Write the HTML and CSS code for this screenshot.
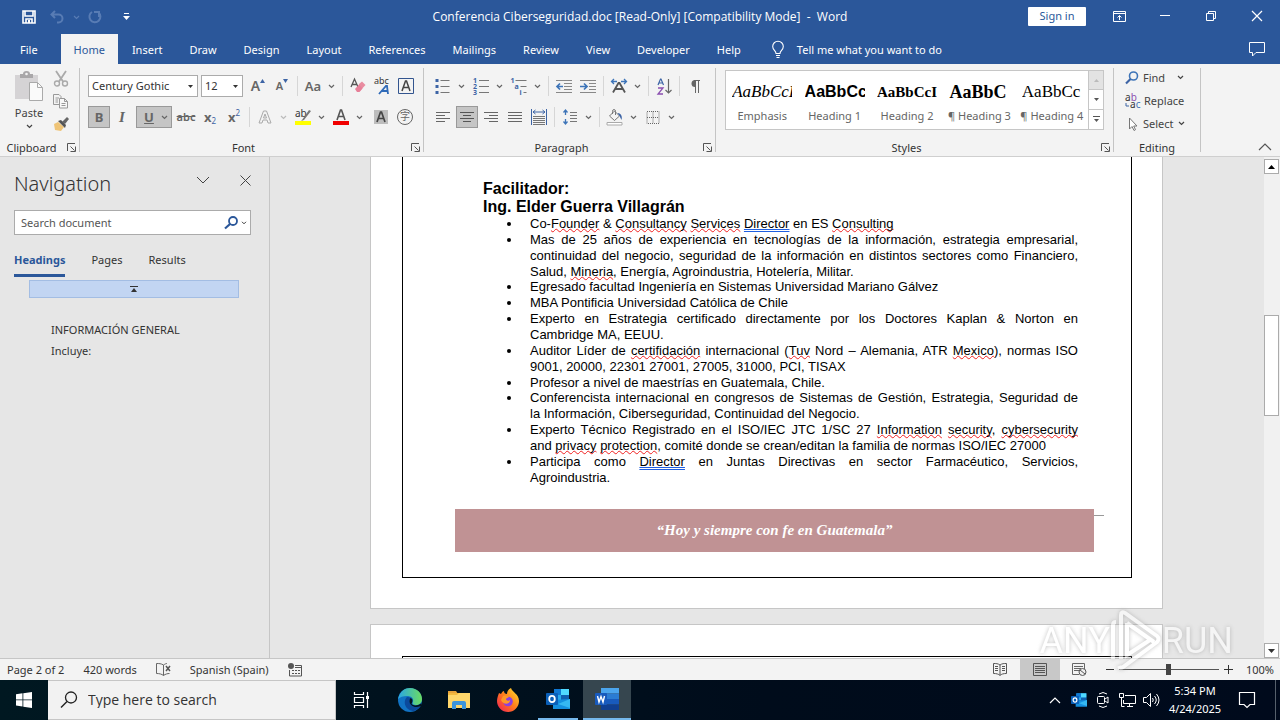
FILE: index.html
```html
<!DOCTYPE html>
<html lang="en">
<head>
    <meta charset="utf-8">
    <title>Conferencia Ciberseguridad.doc - Word</title>
    <link rel="stylesheet" href="styles.css">
</head>
<body>
    <svg class="defs" aria-hidden="true">
        <symbol id="chev" viewBox="0 0 7 5"><path d="M1 1l2.500 2.500L6 1" fill="none" stroke="currentColor" stroke-width="1.200"/></symbol>
        <symbol id="tri" viewBox="0 0 7 4"><path d="M0 0h7L3.500 4z" fill="currentColor"/></symbol>
        <symbol id="launch" viewBox="0 0 9 9"><path d="M.5 8V.5H8M3.500 3.500l4 4M8.500 3.500v5h-5" fill="none" stroke="#555"/></symbol>
        <symbol id="outlook" viewBox="0 0 24 24">
            <path d="M8 2h15v11H8z" fill="#28a8ea"/><path d="M8 2h7v6H8z" fill="#0f78d4"/><path d="M15 8h8v6h-8z" fill="#0f5fb0"/>
            <path d="M15 2h8v6h-8z" fill="#50d9ff"/><path d="M7 13l17-1v10H7z" fill="#1490df"/><path d="M24 12v9L12 17z" fill="#35b8f1"/>
            <rect y="6" width="12" height="12" rx="1" fill="#0a5fb8"/><ellipse cx="6" cy="12" rx="2.800" ry="3.200" fill="none" stroke="#fff" stroke-width="1.800"/>
        </symbol>
    </svg>

    <header class="titlebar">
        <div class="quick">
            <button aria-label="Save"><svg width="14" height="14" viewBox="0 0 14 14"><path d="M1 1h12v12H1zM3 1v5h8V1M4 13V9h6v4" fill="none" stroke="#fff" stroke-width="1.600"/><path d="M6 10h2v3H6z" fill="#fff"/></svg></button>
            <button class="faded" aria-label="Undo"><svg width="14" height="14" viewBox="0 0 14 14"><path d="M5 1L1.500 4.500 5 8M2 4.500h6.500a4 4 0 0 1 0 8H7" fill="none" stroke="currentColor" stroke-width="2"/></svg></button>
            <button class="faded narrow" aria-label="Undo list"><svg width="7" height="5"><use href="#chev"/></svg></button>
            <button class="faded" aria-label="Repeat"><svg width="14" height="14" viewBox="0 0 14 14"><path d="M4 2a5.500 5.500 0 1 0 6.500.5M11 7V2h-5" fill="none" stroke="currentColor" stroke-width="2"/></svg></button>
            <button class="more" aria-label="Customize toolbar"><svg width="7" height="8" viewBox="0 0 7 8"><path d="M1 .5h5" stroke="#fff"/><path d="M0 3h7L3.500 7z" fill="#fff"/></svg></button>
        </div>
        <div class="doc-title">Conferencia Ciberseguridad.doc [Read-Only] [Compatibility Mode]&nbsp; -&nbsp; Word</div>
        <div class="window-buttons">
            <button class="signin">Sign in</button>
            <button aria-label="Ribbon options"><svg width="13" height="11" viewBox="0 0 13 11"><path d="M.5.500h12v10H.5zM.5 2.500h12M6.500 9V4.500M4.500 6.500l2-2 2 2" fill="none" stroke="#fff"/></svg></button>
            <button aria-label="Minimize"><svg width="10" height="10"><path d="M0 4.500h10" stroke="#fff"/></svg></button>
            <button aria-label="Restore"><svg width="10" height="10" viewBox="0 0 10 10"><path d="M.5 2.500h7v7h-7zM2.500 2V.5h7v7H8" fill="none" stroke="#fff"/></svg></button>
            <button aria-label="Close"><svg width="10" height="10" viewBox="0 0 10 10"><path d="M0 0l10 10M10 0L0 10" stroke="#fff" stroke-width="1.200"/></svg></button>
        </div>
    </header>

    <nav class="tabs">
        <a href="#" class="file">File</a>
        <a href="#" class="active">Home</a>
        <a href="#">Insert</a>
        <a href="#">Draw</a>
        <a href="#">Design</a>
        <a href="#">Layout</a>
        <a href="#">References</a>
        <a href="#">Mailings</a>
        <a href="#">Review</a>
        <a href="#">View</a>
        <a href="#">Developer</a>
        <a href="#">Help</a>
        <a href="#" class="tell"><svg width="12" height="17" viewBox="0 0 12 17"><path d="M4 12.500c0-3-3.300-3.500-3.300-7a5.300 5.300 0 0 1 10.600 0c0 3.500-3.300 4-3.300 7zM4 14.500h4M4.500 16.500h3" fill="none" stroke="#fff" stroke-width="1.100"/></svg>Tell me what you want to do</a>
        <button class="comment" aria-label="Comments"><svg width="16" height="15" viewBox="0 0 16 15"><path d="M.5.500h15v10H7l-3.500 3.500v-3.500h-3z" fill="none" stroke="#fff"/></svg></button>
    </nav>

    <section class="ribbon">
        <div class="group clipboard">
            <div class="body">
                <button class="paste">
                    <svg width="30" height="31" viewBox="0 0 30 31"><path d="M1 4h23v24H1z" fill="#d5d3d5"/><path d="M6 3h3a3.500 3 0 0 1 7 0h3v4H6z" fill="#a9a7a9"/><circle cx="12.500" cy="3" r="1.300" fill="#f3f3f3"/><path d="M15.500 11.500h8l5 5v13h-13z" fill="#fafafa" stroke="#aaa"/><path d="M23.500 11.500v5h5" fill="none" stroke="#aaa"/></svg>
                    Paste
                    <svg width="7" height="5"><use href="#chev"/></svg>
                </button>
                <div class="stack">
                    <button aria-label="Cut"><svg width="16" height="16" viewBox="0 0 16 16"><path d="M3 0l7 10.500M13 0L6 10.500" stroke="#aaa" stroke-width="1.800"/><circle cx="4" cy="12.500" r="2.500" fill="none" stroke="#aaa" stroke-width="1.400"/><circle cx="12" cy="12.500" r="2.500" fill="none" stroke="#aaa" stroke-width="1.400"/></svg></button>
                    <button aria-label="Copy"><svg width="16" height="15" viewBox="0 0 16 15"><path d="M6 10.500H.5V.5H6l2 2V4M2.500 4H6M2.500 6H5M2.500 8H5" fill="none" stroke="#999"/><path d="M6.500 4.500h5l3 3v6.500h-8zM11.500 4.500v3h3M8.500 9.500h4M8.500 11.500h4" fill="#f8f8f8" stroke="#999"/></svg></button>
                    <button aria-label="Format Painter"><svg width="16" height="15" viewBox="0 0 16 15"><path d="M1 7l4-2 6 5-3 4-6-1z" fill="#efc477"/><path d="M5 4l3-1 5 5-1 3z" fill="#555"/><path d="M9 5l5-5 2 2-4 5z" fill="#666"/></svg></button>
                </div>
            </div>
            <div class="caption"><span>Clipboard</span><button aria-label="Clipboard options"><svg width="9" height="9"><use href="#launch"/></svg></button></div>
        </div>

        <div class="group font">
            <div class="body rows">
                <div class="row">
                    <div class="combo name"><select aria-label="Font"><option>Century Gothic</option></select><svg width="5" height="3"><use href="#tri"/></svg></div>
                    <div class="combo size"><select aria-label="Font size"><option>12</option></select><svg width="5" height="3"><use href="#tri"/></svg></div>
                    <button class="tool big" aria-label="Grow font">A<svg width="5" height="4" viewBox="0 0 5 4"><path d="M0 4h5L2.500 0z" fill="#3d64a5"/></svg></button>
                    <button class="tool mid" aria-label="Shrink font">A<svg width="5" height="4" viewBox="0 0 5 4"><path d="M0 0h5L2.500 4z" fill="#3d64a5"/></svg></button>
                    <i class="sep"></i>
                    <button class="tool wide case"><b>Aa</b><svg width="7" height="5"><use href="#chev"/></svg></button>
                    <i class="sep"></i>
                    <button class="tool" aria-label="Clear formatting"><svg width="16" height="16" viewBox="0 0 16 16"><path d="M1 9L4.500 1 8 9M2 6.500h5" fill="none" stroke="#555" stroke-width="1.300"/><path d="M9 6l3-2.500 3.500 3.500-6 6.500z" fill="#e98ca0"/><path d="M9 6.500l3.500 4-3 3.500H7L5 11z" fill="#e77f98"/></svg></button>
                    <button class="tool" aria-label="Phonetic guide"><svg width="16" height="18" viewBox="0 0 16 18"><text x="0" y="7" font-size="9" fill="#333">abc</text><path d="M5 17l7-8h1l1 8M8 14h6" fill="none" stroke="#2f6ab8" stroke-width="1.800"/></svg></button>
                    <button class="tool" aria-label="Character border"><svg width="16" height="16" viewBox="0 0 16 16"><path d="M.5.500h15v15H.5z" fill="none" stroke="#33558f"/><path d="M4 13l3.500-10h1L12 13M5.500 9.500h5" fill="none" stroke="#444" stroke-width="1.500"/></svg></button>
                </div>
                <div class="row">
                    <button class="tool on"><b>B</b></button>
                    <button class="tool italic">I</button>
                    <button class="tool wide on under"><b>U</b><svg width="7" height="5"><use href="#chev"/></svg></button>
                    <button class="tool strike">abc</button>
                    <button class="tool"><b>x</b><sub>2</sub></button>
                    <button class="tool"><b>x</b><sup>2</sup></button>
                    <i class="sep"></i>
                    <button class="tool wide pale" aria-label="Text effects"><svg width="14" height="14" viewBox="0 0 14 14"><path d="M1 13L5.500 1h3L13 13h-3l-1-3H5l-1 3zM5.500 8h3L7 4z" fill="none" stroke="#aaa"/></svg><svg width="7" height="5"><use href="#chev"/></svg></button>
                    <button class="tool wide" aria-label="Highlight"><svg width="18" height="17" viewBox="0 0 18 17"><text x="1" y="8" font-size="10" fill="#333">ab</text><path d="M8 11l7-10 2 1-7 9-3 1z" fill="#777"/><path d="M1 12h16v4H1z" fill="#ff0"/></svg><svg width="7" height="5"><use href="#chev"/></svg></button>
                    <button class="tool wide" aria-label="Font color"><svg width="16" height="17" viewBox="0 0 16 17"><path d="M4 11L7.500 1h1L12 11M5.500 7.500h5" fill="none" stroke="#555" stroke-width="1.600"/><path d="M0 12h16v4H0z" fill="#f00000"/></svg><svg width="7" height="5"><use href="#chev"/></svg></button>
                    <button class="tool last" aria-label="Character shading"><svg width="14" height="14" viewBox="0 0 14 14"><path d="M0 0h14v14H0z" fill="#bdbdbd"/><path d="M3 12l3.500-10h1L11 12M4.500 8.500h5" fill="none" stroke="#444" stroke-width="1.700"/></svg></button>
                    <button class="tool enclose" aria-label="Enclose characters"><span>字</span></button>
                </div>
            </div>
            <div class="caption"><span>Font</span><button aria-label="Font options"><svg width="9" height="9"><use href="#launch"/></svg></button></div>
        </div>

        <div class="group paragraph">
            <div class="body rows">
                <div class="row">
                    <button class="tool wide" aria-label="Bullets"><svg width="15" height="15" viewBox="0 0 15 15"><path d="M0 0h3v3H0zM0 6h3v3H0zM0 12h3v3H0z" fill="#3d64a5"/><path d="M5 1.500h9M5 7.500h9M5 13.500h9" stroke="#777"/></svg><svg width="7" height="5"><use href="#chev"/></svg></button>
                    <button class="tool wide" aria-label="Numbering"><svg width="16" height="17" viewBox="0 0 16 17"><g font-size="7" font-weight="bold" fill="#3d64a5"><text y="5">1</text><text y="11">2</text><text y="17">3</text></g><path d="M6 2.500h10M6 8.500h10M6 14.500h10" stroke="#777"/></svg><svg width="7" height="5"><use href="#chev"/></svg></button>
                    <button class="tool wide" aria-label="Multilevel list"><svg width="17" height="17" viewBox="0 0 17 17"><g font-size="7" font-weight="bold" fill="#3d64a5"><text y="5">1</text><text x="4" y="11">a</text><text x="9" y="17">i</text></g><path d="M5 2.500h11M10 8.500h6M13 14.500h3" stroke="#777"/></svg><svg width="7" height="5"><use href="#chev"/></svg></button>
                    <i class="sep"></i>
                    <button class="tool" aria-label="Decrease indent"><svg width="16" height="13" viewBox="0 0 16 13"><path d="M0 .5h16M8 3.500h8M8 6.500h8M8 9.500h8M0 12.500h16" stroke="#888"/><path d="M7 6.500H1M4 3.500l-3 3 3 3" fill="none" stroke="#3d74b8" stroke-width="1.700"/></svg></button>
                    <button class="tool" aria-label="Increase indent"><svg width="16" height="13" viewBox="0 0 16 13"><path d="M0 .5h16M9 3.500h7M9 6.500h7M9 9.500h7M0 12.500h16" stroke="#888"/><path d="M0 6.500h6M4 3.500l3 3-3 3" fill="none" stroke="#3d74b8" stroke-width="1.700"/></svg></button>
                    <i class="sep"></i>
                    <button class="tool wide" aria-label="Asian layout"><svg width="16" height="14" viewBox="0 0 16 14"><path d="M2 13.500L7.500 4h1L14 13.500M4.500 10h7" fill="none" stroke="#555" stroke-width="1.800"/><path d="M6 2.500H1M3 0L.5 2.500 3 5M10 2.500h5M13 0l2.500 2.500L13 5" fill="none" stroke="#3d74b8" stroke-width="1.300"/></svg><svg width="7" height="5"><use href="#chev"/></svg></button>
                    <i class="sep"></i>
                    <button class="tool" aria-label="Sort"><svg width="15" height="17" viewBox="0 0 15 17"><path d="M1 7l2.500-6h.5L6.500 7M2 5h4" fill="none" stroke="#3d64a5" stroke-width="1.200"/><path d="M1 10h5L1 16h5" fill="none" stroke="#8b4fb0" stroke-width="1.300"/><path d="M11.500 1v14M8.500 12l3 3 3-3" fill="none" stroke="#666" stroke-width="1.200"/></svg></button>
                    <i class="sep"></i>
                    <button class="tool" aria-label="Show paragraph marks"><svg width="10" height="13" viewBox="0 0 10 13"><path d="M5 0a3.500 3.500 0 0 0 0 7z" fill="#666"/><path d="M4 .5h6M5.500 0v13M8.500 0v13" stroke="#666"/></svg></button>
                </div>
                <div class="row">
                    <button class="tool" aria-label="Align left"><svg width="14" height="11" viewBox="0 0 14 11"><path d="M0 .5h14M0 3.500h9M0 6.500h14M0 9.500h9" stroke="#666"/></svg></button>
                    <button class="tool on align" aria-label="Center"><svg width="14" height="11" viewBox="0 0 14 11"><path d="M0 .5h14M3 3.500h8M0 6.500h14M3 9.500h8" stroke="#555"/></svg></button>
                    <button class="tool" aria-label="Align right"><svg width="14" height="11" viewBox="0 0 14 11"><path d="M0 .5h14M5 3.500h9M0 6.500h14M5 9.500h9" stroke="#666"/></svg></button>
                    <button class="tool" aria-label="Justify"><svg width="14" height="11" viewBox="0 0 14 11"><path d="M0 .5h14M0 3.500h14M0 6.500h14M0 9.500h14" stroke="#666"/></svg></button>
                    <button class="tool" aria-label="Distribute"><svg width="16" height="16" viewBox="0 0 16 16"><path d="M.5 0v16M15.500 0v16M2 3h12M4.500 1L2 3l2.500 2M11.500 1L14 3l-2.500 2" fill="none" stroke="#3d64a5"/><path d="M2 7.500h12M2 9.500h12M2 11.500h12M2 13.500h12M2 15.500h12" stroke="#777"/></svg></button>
                    <i class="sep"></i>
                    <button class="tool wide" aria-label="Line spacing"><svg width="14" height="16" viewBox="0 0 14 16"><path d="M2.500 1v5M.5 3.500l2-2.500 2 2.500M2.500 10v5M.5 12.500l2 2.500 2-2.500" fill="none" stroke="#3d74b8" stroke-width="1.300"/><path d="M7 3.500h7M7 6.500h7M7 9.500h7M7 12.500h7" stroke="#777"/></svg><svg width="7" height="5"><use href="#chev"/></svg></button>
                    <i class="sep"></i>
                    <button class="tool wide" aria-label="Shading"><svg width="17" height="17" viewBox="0 0 17 17"><path d="M3 7l5-5 5 5-5 4.500zM6 5V2.500A1.500 2 0 0 1 9 2.500V6" fill="none" stroke="#777"/><path d="M11 4c4 0 5 4 4 7l-2-4z" fill="#3d64a5"/><path d="M.5 13.500h15v2.500H.5z" fill="#fff" stroke="#aaa"/></svg><svg width="7" height="5"><use href="#chev"/></svg></button>
                    <button class="tool wide" aria-label="Borders"><svg width="13" height="13" viewBox="0 0 13 13"><path d="M.5.500h12v12H.5zM6.500.500v12M.5 6.500h12" fill="none" stroke="#666" stroke-dasharray="1 1"/></svg><svg width="7" height="5"><use href="#chev"/></svg></button>
                </div>
            </div>
            <div class="caption"><span>Paragraph</span><button aria-label="Paragraph options"><svg width="9" height="9"><use href="#launch"/></svg></button></div>
        </div>

        <div class="group styles">
            <div class="gallery">
                <button class="style"><em>AaBbCcI</em><span>Emphasis</span></button>
                <button class="style"><strong class="sans">AaBbCc</strong><span>Heading 1</span></button>
                <button class="style"><strong class="small">AaBbCcI</strong><span>Heading 2</span></button>
                <button class="style"><strong class="large">AaBbC</strong><span>¶ Heading 3</span></button>
                <button class="style"><b>AaBbCc</b><span>¶ Heading 4</span></button>
                <div class="steps">
                    <button class="off" aria-label="Previous styles"><svg width="5" height="3" viewBox="0 0 7 4"><path d="M0 4h7L3.500 0z" fill="#bbb"/></svg></button>
                    <button aria-label="Next styles"><svg width="5" height="3"><use href="#tri"/></svg></button>
                    <button aria-label="More styles"><svg width="7" height="7" viewBox="0 0 7 7"><path d="M0 .5h7" stroke="#555"/><path d="M1 3h5L3.500 6z" fill="#555"/></svg></button>
                </div>
            </div>
            <div class="caption"><span>Styles</span><button aria-label="Styles options"><svg width="9" height="9"><use href="#launch"/></svg></button></div>
        </div>

        <div class="group editing">
            <div class="commands">
                <button><svg width="14" height="14" viewBox="0 0 14 14"><circle cx="8.500" cy="5" r="4" fill="none" stroke="#3d74b8" stroke-width="1.600"/><path d="M5.500 8L1 12.500" stroke="#3d64a5" stroke-width="2.200"/></svg>Find<svg class="drop" width="7" height="5"><use href="#chev"/></svg></button>
                <button><svg width="15" height="16" viewBox="0 0 15 16"><text y="8" font-size="10" fill="#333">a<tspan fill="#8b4fb0">b</tspan></text><text x="5" y="15" font-size="10" fill="#333">a<tspan fill="#3d74b8">c</tspan></text><path d="M1 10v3h3" fill="none" stroke="#3d64a5"/></svg>Replace</button>
                <button><svg width="14" height="14" viewBox="0 0 14 14"><path d="M4.500 1v11l2.500-2.500 2 4 1.500-.8-1.800-3.700h3.300z" fill="#fff" stroke="#777"/></svg>Select<svg width="7" height="5"><use href="#chev"/></svg></button>
            </div>
            <div class="caption"><span>Editing</span></div>
        </div>
        <button class="collapse" aria-label="Collapse ribbon"><svg width="14" height="8" viewBox="0 0 14 8"><path d="M1 7l6-6 6 6" fill="none" stroke="#555" stroke-width="1.200"/></svg></button>
    </section>

    <main class="workspace">
        <aside class="navpane">
            <div class="nav-head">
                <h2>Navigation</h2>
                <button aria-label="Pane options"><svg width="14" height="8" viewBox="0 0 14 8"><path d="M1 1l6 6 6-6" fill="none" stroke="#444"/></svg></button>
                <button aria-label="Close pane"><svg width="11" height="11" viewBox="0 0 11 11"><path d="M.5.500l10 10M10.500.500l-10 10" stroke="#444"/></svg></button>
            </div>
            <div class="doc-search">
                <input type="text" placeholder="Search document" aria-label="Search document">
                <svg width="14" height="13" viewBox="0 0 14 13"><circle cx="9" cy="5" r="4" fill="none" stroke="#2b579a" stroke-width="1.800"/><path d="M6 8l-5 4.500" stroke="#2b579a" stroke-width="2.200"/></svg>
                <svg width="6" height="4"><use href="#chev"/></svg>
            </div>
            <div class="nav-tabs">
                <button class="current">Headings</button>
                <button>Pages</button>
                <button>Results</button>
            </div>
            <button class="jump" aria-label="Jump to the beginning"><svg width="8" height="7" viewBox="0 0 8 7"><path d="M0 .5h8" stroke="#333"/><path d="M1 6h6L4 2z" fill="#333"/></svg></button>
            <ul class="headings">
                <li><a href="#">INFORMACIÓN GENERAL</a></li>
                <li><a href="#">Incluye:</a></li>
            </ul>
        </aside>

        <div class="pages">
            <article class="page" lang="es">
                <div class="frame">
                    <div class="text">
                        <h3>Facilitador:</h3>
                        <h3>Ing. Elder Guerra Villagrán</h3>
                        <ul>
                            <li>Co-<u>Founder</u> &amp; <u>Consultancy</u> <u>Services</u> <u class="grammar">Director</u> en ES <u>Consulting</u></li>
                            <li>Mas de 25 años de experiencia en tecnologías de la información, estrategia empresarial, continuidad del negocio, seguridad de la información en distintos sectores como Financiero, Salud, <u>Mineria</u>, Energía, Agroindustria, Hotelería, Militar.</li>
                            <li>Egresado facultad Ingeniería en Sistemas Universidad Mariano Gálvez</li>
                            <li>MBA Pontificia Universidad Católica de Chile</li>
                            <li>Experto en Estrategia certificado directamente por los Doctores Kaplan &amp; Norton en Cambridge MA, EEUU.</li>
                            <li>Auditor Líder de <u>certifidación</u> internacional (<u>Tuv</u> Nord – Alemania, ATR <u>Mexico</u>), normas ISO 9001, 20000, 22301 27001, 27005, 31000, PCI, TISAX</li>
                            <li>Profesor a nivel de maestrías en Guatemala, Chile.</li>
                            <li><span class="line">Conferencista internacional en congresos de Sistemas de Gestión, Estrategia, Seguridad de</span> la Información, Ciberseguridad, Continuidad del Negocio.</li>
                            <li><span class="line">Experto Técnico Registrado en el ISO/IEC JTC 1/SC 27 <u>Information</u> <u>security</u>, <u>cybersecurity</u></span> and <u>privacy</u> <u>protection</u>, comité donde se crean/editan la familia de normas ISO/IEC 27000</li>
                            <li><span class="line">Participa como <u class="grammar">Director</u> en Juntas Directivas en sector Farmacéutico, Servicios,</span> Agroindustria.</li>
                        </ul>
                    </div>
                    <p class="motto">“Hoy y siempre con fe en Guatemala”</p>
                </div>
            </article>
            <article class="page next"><div class="frame"></div></article>
        </div>

        <div class="scrollbar">
            <button aria-label="Scroll up"><svg width="7" height="4" viewBox="0 0 7 4"><path d="M0 4h7L3.500 0z"/></svg></button>
            <div class="thumb"></div>
            <button aria-label="Scroll down"><svg width="7" height="4"><use href="#tri"/></svg></button>
        </div>

        <div class="watermark">
            <span>ANY</span>
            <svg width="52" height="64" viewBox="0 0 52 64"><path d="M3 50V16q0-3 3-3M11 50V6q0-4 4-2l32 23q3 3 0 6L13 58q-3 2-4-1M17 14l27 19M17 14v32l23-15" fill="none" stroke="#fff" stroke-width="4"/></svg>
            <span>RUN</span>
        </div>
    </main>

    <footer class="statusbar">
        <span>Page 2 of 2</span>
        <span>420 words</span>
        <svg width="15" height="13" viewBox="0 0 15 13"><path d="M7.500 2C5 .5 3 .5.500.500v10c3 0 5 .5 7 2zM7.500 2C9 1 10 .5 11 .5M7.500 12.500c2-1.500 4-2 6-2" fill="none" stroke="#666"/><path d="M10 3l4 5M14 3l-4 5" stroke="#555" stroke-width="1.500"/></svg>
        <span>Spanish (Spain)</span>
        <svg width="14" height="14" viewBox="0 0 14 14"><circle cx="3" cy="3" r="3" fill="#555"/><path d="M7 2.500h6.500v10.500h-12V7M4 7.500h2M7 7.500h2M10 7.500h2M4 10.500h2M7 10.500h2M10 10.500h2M7 4.500h6" fill="none" stroke="#555"/></svg>
        <div class="views">
            <button aria-label="Read mode"><svg width="14" height="13" viewBox="0 0 14 13"><path d="M7 2C5 .5 3 .5.500.500v10c3 0 5 .5 6.500 2 1.500-1.500 3.500-2 6.500-2v-10C11 .5 9 .5 7 2v10M2 3.500h3M2 5.500h3M2 7.500h3M9 3.500h3M9 5.500h3M9 7.500h3" fill="none" stroke="#555"/></svg></button>
            <button class="on" aria-label="Print layout"><svg width="14" height="13" viewBox="0 0 14 13"><path d="M.5.500h13v12H.5zM2 3.500h10M2 5.500h10M2 7.500h10M2 9.500h10" fill="none" stroke="#555"/></svg></button>
            <button aria-label="Web layout"><svg width="15" height="13" viewBox="0 0 15 13"><path d="M7 11.500H.5V.5h12V6M2 3.500h9M2 5.500h7M2 7.500h5" fill="none" stroke="#666"/><circle cx="10.500" cy="9" r="3.500" fill="#eee" stroke="#555"/><path d="M8 7l5 4" stroke="#555"/></svg></button>
        </div>
        <div class="zoom">
            <button aria-label="Zoom out"><svg width="8" height="9"><path d="M0 4.500h8" stroke="#333"/></svg></button>
            <input type="range" min="0" max="200" value="100" aria-label="Zoom">
            <button aria-label="Zoom in"><svg width="9" height="9"><path d="M0 4.500h9M4.500 0v9" stroke="#333"/></svg></button>
            <span>100%</span>
        </div>
    </footer>

    <div class="taskbar">
        <button class="start" aria-label="Start"><svg width="16" height="16" viewBox="0 0 16 16"><path d="M0 2.200L6.500 1.300v6.200H0zM7.300 1.200L16 0v7.500H7.300zM0 8.300h6.500v6.200L0 13.600zM7.300 8.300H16V16l-8.700-1.200z" fill="#fff"/></svg></button>
        <label class="search">
            <svg width="18" height="18" viewBox="0 0 18 18"><circle cx="11" cy="6.500" r="5.500" fill="none" stroke="#222" stroke-width="1.300"/><path d="M7 10.500L1 16.500" stroke="#222" stroke-width="1.400"/></svg>
            <input type="text" placeholder="Type here to search" aria-label="Type here to search">
        </label>
        <button class="app" aria-label="Task view"><svg width="17" height="16" viewBox="0 0 17 16"><path d="M1.500 0v2.500h9V0M1.500 16v-2.500h9V16M1.500 5.500h9v5h-9zM14.500 0v16" fill="none" stroke="#fff" stroke-width="1.200"/><path d="M13 4h3v3h-3z" fill="#fff"/></svg></button>
        <button class="app" aria-label="Edge"><svg width="24" height="24" viewBox="0 0 24 24"><defs><linearGradient id="eg" x1="0" y1="0" x2="1" y2="0"><stop offset="0" stop-color="#2aa7e4"/><stop offset="1" stop-color="#6bdc62"/></linearGradient></defs><circle cx="12" cy="12" r="12" fill="#1173c4"/><path d="M0 11C2 3 7 0 12 0c7 0 12 5 12 11 0 4-3 6-6 6-3 0-4-1-3-3 1-4-2-6-6-6-4 0-7 1-9 3z" fill="url(#eg)"/><path d="M9 9c-5 5-1 14 7 14 3-1 5-3 7-5-4 2-8 1-10-1-2-2-2-5 0-7-1-1-3-1-4-1z" fill="#0b4a9c"/><path d="M12.500 10c3 1 2 4 1 6 2 2 6 2 9.500-.5L23 18c-4 2-8 1-10-1-2-2-2-5-.5-7z" fill="#021420"/></svg></button>
        <button class="app" aria-label="File Explorer"><svg width="22" height="20" viewBox="0 0 22 20"><path d="M0 1h8l2 3H0z" fill="#e8a33a"/><path d="M0 3h22v15H0z" fill="#ffd76b"/><path d="M0 3h11l-2 2H0z" fill="#f3b93f"/><path d="M4 19v-6q0-2 2-2h10q2 0 2 2v6h-4v-4H8v4z" fill="#3d95dc"/></svg></button>
        <button class="app" aria-label="Firefox"><svg width="24" height="24" viewBox="0 0 24 24"><defs><linearGradient id="fx" x1="1" y1="0" x2="0" y2="1"><stop offset="0" stop-color="#ffe82e"/><stop offset=".5" stop-color="#ff7a1c"/><stop offset="1" stop-color="#f0185a"/></linearGradient></defs><path d="M3 5l2 1c1-2 2-3 3-3 0 2 1 3 3 3 0-3 2-5 4-6 1 4 8 6 8 13a11 11 0 0 1-22 0c0-3 1-5 2-8z" fill="url(#fx)"/><circle cx="12" cy="13.500" r="4.800" fill="#8b3fe0"/><path d="M7 8c2-1 5 0 6 1-1 1-3 1-3 2 0 2 3 2 4 1 0 5-7 5-9 0z" fill="#ff9826"/></svg></button>
        <button class="app open" aria-label="Outlook"><svg width="24" height="24"><use href="#outlook"/></svg></button>
        <button class="app open active" aria-label="Word"><svg width="25" height="22" viewBox="0 0 25 22"><path d="M6 0h18v5.500H6z" fill="#4ba5ee"/><path d="M6 5.500h18V11H6z" fill="#2b7cd3"/><path d="M6 11h18v5.500H6z" fill="#185abd"/><path d="M6 16.500h18V22H6z" fill="#103f91"/><rect y="5" width="12" height="12" rx="1" fill="#185abd"/><path d="M2.500 8l1.500 6 2-5.500L8 14l1.500-6" fill="none" stroke="#fff" stroke-width="1.400"/></svg></button>
        <div class="tray">
            <button aria-label="Hidden icons"><svg width="12" height="7" viewBox="0 0 12 7"><path d="M1 6l5-5 5 5" fill="none" stroke="#fff" stroke-width="1.200"/></svg></button>
            <button aria-label="Outlook"><svg width="16" height="16"><use href="#outlook"/></svg></button>
            <button aria-label="Meet now"><svg width="12" height="16" viewBox="0 0 12 16"><path d="M2 2q4-3 8 0M2 14q4 3 8 0M.5 5.500q0-1 1-1h5q1 0 1 1v5q0 1-1 1h-5q-1 0-1-1zM8 7l3-2v6L8 9" fill="none" stroke="#fff"/></svg></button>
            <button aria-label="Network"><svg width="17" height="14" viewBox="0 0 17 14"><path d="M6 2.500h10.500v8h-12V7M8 13.500h6M10.500 10.500v3M.5.500h4v4h-4zM2.500 5v8.500h3" fill="none" stroke="#fff"/></svg></button>
            <button aria-label="Volume"><svg width="17" height="14" viewBox="0 0 17 14"><path d="M.5 4.500h3l4-4v13l-4-4h-3zM9.500 5q1.500 2 0 4M11.500 3q3.500 4 0 8M13.500 1q5 6 0 12" fill="none" stroke="#fff"/></svg></button>
            <div class="clock"><span>5:34 PM</span><span>4/24/2025</span></div>
            <button class="notice" aria-label="Notifications"><svg width="17" height="16" viewBox="0 0 17 16"><path d="M.5.500h15v12H11l-3 3-3-3H.5z" fill="none" stroke="#fff" stroke-width="1.200"/></svg></button>
            <i class="desktop"></i>
        </div>
    </div>
</body>
</html>
```
FILE: styles.css
```css
* {
    box-sizing: border-box;
}

body {
    margin: 0;
    height: 100vh;
    display: flex;
    flex-direction: column;
    overflow: hidden;
    font-family: "Noto Sans", "Noto Sans CJK SC", sans-serif;
    font-size: 11px;
    line-height: 16px;
    color: #333;
}

button, input, select {
    font: inherit;
    color: inherit;
    border: 0;
    padding: 0;
    margin: 0;
    background: none;
}

button {
    display: flex;
    align-items: center;
    justify-content: center;
    white-space: nowrap;
}

a {
    color: inherit;
    text-decoration: none;
}

svg {
    flex: none;
    overflow: visible;
}

.defs {
    display: none;
}

/* title bar */
.titlebar {
    height: 34px;
    display: grid;
    grid-template-columns: 1fr auto 1fr;
    align-items: center;
    background: #2b579a;
    color: #fff;
}

.doc-title {
    font-family: "Open Sans", sans-serif;
    font-size: 12px;
}

.quick {
    display: flex;
    align-items: center;
    padding-left: 15px;
}

.quick button {
    width: 28px;
    height: 28px;
}

.quick .narrow {
    width: 10px;
}

.quick .faded {
    color: #587cb4;
}

.quick .more {
    width: 34px;
}

.window-buttons {
    display: flex;
    align-items: center;
    justify-content: flex-end;
    padding-bottom: 2px;
}

.window-buttons button {
    width: 46px;
    height: 30px;
}

.window-buttons .signin {
    width: 58px;
    height: 19px;
    margin-right: 10px;
    background: #fff;
    color: #2b579a;
    border-radius: 1px;
}

/* ribbon tabs */
.tabs {
    height: 30px;
    display: flex;
    gap: 1px;
    background: #2b579a;
    color: #fff;
}

.tabs a {
    display: flex;
    align-items: center;
    padding: 1px 13px 0;
}

.tabs .file {
    padding-left: 20px;
    padding-right: 22px;
}

.tabs .active {
    background: #f3f3f3;
    color: #2b579a;
}

.tabs .tell {
    gap: 13px;
    padding-left: 17px;
}

.tabs .comment {
    margin-left: auto;
    padding: 0 15px;
}

/* ribbon */
.ribbon {
    height: 93px;
    flex: none;
    display: flex;
    background: #f3f3f3;
    border-bottom: 1px solid #cfcfcf;
}

.group {
    display: flex;
    flex-direction: column;
    justify-content: space-between;
    margin: 4px 0;
    border-right: 1px solid #c4c4c4;
}

.clipboard {
    width: 80px;
}

.font {
    width: 344px;
}

.paragraph {
    width: 292px;
}

.styles {
    width: 398px;
}

.editing {
    width: 87px;
}

.body {
    display: flex;
}

.paste {
    flex-direction: column;
    justify-content: flex-start;
    width: 50px;
    margin-left: 4px;
    padding-top: 3px;
    gap: 3px;
}

.paste, .commands {
    color: #444;
}

.stack {
    display: flex;
    flex-direction: column;
    margin-top: -1px;
}

.stack button {
    width: 14px;
    height: 23px;
}

.rows {
    flex-direction: column;
    gap: 9px;
    padding: 7px 0 0 7px;
}

.font .rows {
    padding-left: 8px;
}

.row {
    display: flex;
    height: 22px;
}

.combo {
    display: flex;
    align-items: center;
    background: #fff;
    border: 1px solid #ababab;
    padding-right: 4px;
    color: #333;
}

.combo select {
    flex: 1;
    min-width: 0;
    appearance: none;
    padding-left: 3px;
}

.combo.name {
    width: 110px;
    margin-right: 3px;
}

.combo.size {
    width: 42px;
    margin-right: 3px;
}

.tool {
    width: 24px;
    height: 22px;
    color: #666;
}

.wide {
    width: 38px;
    justify-content: flex-start;
}

.wide > :first-child {
    width: 24px;
    padding: 0 3px;
}

.wide > svg:last-child {
    margin-left: 3px;
}

.big, .mid {
    align-items: flex-start;
    font-weight: 600;
    line-height: 22px;
}

.big {
    font-size: 14px;
}

.tool.big svg, .tool.mid svg {
    margin-top: 4px;
}

.tool b {
    font-size: 13px;
}

.case b {
    font-weight: 600;
}

.pale {
    color: #bbb;
}

.on {
    width: 22px;
    background: #c5c5c5;
    border: 1px solid #999;
}

.align {
    margin: 0 1px;
}

.italic {
    font-family: "Liberation Serif", serif;
    font-size: 15px;
    font-style: italic;
    font-weight: bold;
}

.under {
    width: 36px;
    margin: 0 2px;
}

.under b {
    padding: 0 6px;
    text-decoration: underline;
}

.wide.under > svg {
    margin-left: 0;
}

.strike {
    font-weight: 600;
    text-decoration: line-through;
}

.tool sub, .tool sup {
    font-size: 8px;
    line-height: 8px;
    color: #3d64a5;
}

.tool sub {
    align-self: flex-end;
    margin-bottom: 3px;
}

.tool sup {
    align-self: flex-start;
    margin-top: 3px;
}

.last {
    margin-left: 2px;
}

.enclose span {
    width: 16px;
    height: 16px;
    border: 1px solid #666;
    border-radius: 50%;
    font-size: 10px;
    line-height: 13px;
}

.sep {
    width: 1px;
    margin: 1px 3px;
    background: #d6d6d6;
}

.caption {
    display: flex;
    align-items: center;
    height: 9px;
}

.caption span {
    flex: 1;
    text-align: center;
}

.caption button {
    width: 16px;
}

.gallery {
    display: flex;
    height: 60px;
    margin: 2px 9px 0;
    background: #fff;
    border: 1px solid #c6c6c6;
}

.style {
    flex: 1;
    min-width: 0;
    flex-direction: column;
    gap: 4px;
    padding-top: 3px;
    color: #666;
}

.style > :first-child {
    width: 60px;
    overflow: hidden;
    color: #000;
    font-family: "Liberation Serif", serif;
    font-weight: normal;
    font-size: 17px;
    line-height: 24px;
    text-align: left;
}

.style .sans {
    font-family: "Liberation Sans", Arial, sans-serif;
    font-weight: bold;
    font-size: 16px;
}

.style .small {
    font-weight: bold;
    font-size: 15px;
}

.style .large {
    font-weight: bold;
    font-size: 18px;
}

.steps {
    display: grid;
    grid-template-rows: 1fr 1fr 1fr;
    width: 15px;
}

.steps button {
    border-left: 1px solid #c6c6c6;
    border-bottom: 1px solid #c6c6c6;
    color: #555;
}

.steps button:last-child {
    border-bottom: 0;
}

.steps .off {
    background: #e3e3e3;
}

.commands {
    margin-top: -2px;
    padding-left: 11px;
}

.commands button {
    height: 23px;
    gap: 4px;
}

.commands .drop {
    margin-left: 8px;
}

.collapse {
    align-self: flex-end;
    margin-left: auto;
    padding: 5px 8px;
}

/* workspace */
.workspace {
    flex: 1;
    min-height: 0;
    display: flex;
    position: relative;
    background: #e6e6e6;
}

.navpane {
    width: 270px;
    flex: none;
    padding: 11px 18px 0 14px;
    border-right: 1px solid #c6c6c6;
}

.nav-head {
    display: flex;
    align-items: center;
    gap: 30px;
    height: 32px;
}

.nav-head h2 {
    flex: 1;
    margin: 0;
    font-size: 20px;
    font-weight: 300;
}

.nav-head button {
    padding-bottom: 8px;
}

.doc-search {
    display: flex;
    align-items: center;
    gap: 3px;
    height: 25px;
    margin-top: 10px;
    padding: 0 3px 0 6px;
    background: #fff;
    border: 1px solid #ababab;
}

.doc-search input {
    flex: 1;
    min-width: 0;
}

input::placeholder {
    color: #555;
    opacity: 1;
}

input:focus {
    outline: 0;
}

.nav-tabs {
    display: flex;
    gap: 26px;
    margin-top: 14px;
}

.nav-tabs button {
    height: 28px;
    padding-bottom: 4px;
    border-bottom: 3px solid transparent;
}

.nav-tabs .current {
    font-weight: bold;
    color: #2b579a;
    border-color: #2b579a;
}

.jump {
    width: 210px;
    height: 18px;
    margin: 3px 0 0 15px;
    background: #c2d5f2;
    border: 1px solid #a3bde3;
}

.headings {
    list-style: none;
    margin: 21px 0 0 37px;
    padding: 0;
    line-height: 21px;
}

.pages {
    flex: 1;
    min-width: 0;
    display: flex;
    flex-direction: column;
    align-items: center;
    gap: 15px;
    padding-right: 1px;
    overflow: hidden;
}

.page {
    width: 793px;
    flex: none;
    padding: 0 30px 30px 31px;
    background: #fff;
    border: 1px solid #c6c6c6;
    border-top: 0;
    color: #000;
}

.frame {
    padding: 23px 37px 25px 52px;
    border: 1px solid #000;
    border-top: 0;
}

.next {
    border-top: 1px solid #c6c6c6;
    padding-top: 31px;
}

.next .frame {
    border-top: 1px solid #000;
}

.text {
    padding: 0 16px 0 28px;
    font-family: "Liberation Sans", Arial, sans-serif;
    font-size: 13px;
    line-height: 1.22;
}

.text h3 {
    margin: 0;
    font-size: 16px;
    line-height: 18px;
}

.text ul {
    margin: 0;
    padding-left: 39px;
    text-align: justify;
}

.text li {
    padding-left: 8px;
}

.line {
    display: block;
    text-align-last: justify;
}

.text u {
    text-decoration: underline wavy #f02020 1px;
    text-underline-offset: 0;
    text-decoration-skip-ink: none;
}

.text .grammar {
    text-decoration: underline double #1f5fe0 1px;
    text-underline-offset: 1px;
}

.motto {
    position: relative;
    margin: 23px 0 0;
    background: #c09294;
    color: #fff;
    font-family: "Liberation Serif", serif;
    font-size: 15px;
    font-weight: bold;
    font-style: italic;
    line-height: 43px;
    text-align: center;
}

.motto::after {
    content: "";
    position: absolute;
    left: 100%;
    top: 6px;
    width: 10px;
    height: 1px;
    background: #999;
}

.scrollbar {
    display: flex;
    flex-direction: column;
    width: 16px;
    padding-top: 2px;
    background: #f1f1f1;
}

.scrollbar button, .thumb {
    width: 15px;
    height: 15px;
    background: #fff;
    border: 1px solid #ababab;
}

.thumb {
    height: 101px;
    margin: 141px 0 auto;
}

.watermark {
    position: absolute;
    right: 47px;
    bottom: -15px;
    display: flex;
    align-items: center;
    font-family: Roboto, sans-serif;
    font-size: 36px;
    color: #fff;
    opacity: 0.6;
    filter: drop-shadow(0 0 2px #999);
    z-index: 1;
}

/* status bar */
.statusbar {
    height: 22px;
    flex: none;
    display: flex;
    align-items: center;
    gap: 19px;
    padding-left: 7px;
    background: #f3f3f3;
    border-top: 1px solid #c6c6c6;
}

.views {
    display: flex;
    align-self: stretch;
    margin-left: auto;
}

.views button {
    width: 40px;
    border: 0;
}

.views .on {
    background: #c8c8c8;
}

.zoom {
    display: flex;
    align-items: center;
    gap: 5px;
    margin-left: -13px;
    padding-right: 6px;
}

.zoom input {
    width: 100px;
    height: 12px;
    appearance: none;
    background: linear-gradient(#555, #555) center / 100% 1px no-repeat;
}

.zoom input::-webkit-slider-thumb {
    appearance: none;
    width: 5px;
    height: 11px;
    background: #444;
}

.zoom span {
    margin-left: 8px;
}

/* taskbar */
.taskbar {
    height: 40px;
    flex: none;
    display: flex;
    background: linear-gradient(90deg, #001821, #000c1b 60%, #000a1c);
    color: #fff;
}

.start {
    width: 48px;
}

.search {
    display: flex;
    align-items: center;
    gap: 10px;
    width: 288px;
    padding-left: 12px;
    background: #f2f2f2;
    border: 1px solid #c6c6c6;
    border-left: 0;
    font-family: "Open Sans", sans-serif;
    font-size: 14px;
    color: #222;
}

.search input {
    flex: 1;
    min-width: 0;
}

.search input::placeholder {
    color: #333;
}

.app {
    width: 48px;
    margin-left: 1px;
}

.open {
    width: 40px;
    margin: 0 5px 0 6px;
    border-bottom: 2px solid #76b9ed;
}

.open.active {
    width: 48px;
    margin: 0;
    background: #36464f;
}

.tray {
    display: flex;
    margin-left: auto;
}

.tray button {
    width: 24px;
}

.clock {
    display: flex;
    flex-direction: column;
    align-items: center;
    justify-content: center;
    width: 64px;
    line-height: 18px;
}

.tray .notice {
    width: 40px;
}

.desktop {
    width: 5px;
    margin-left: 8px;
    border-left: 1px solid #56606c;
}
```
